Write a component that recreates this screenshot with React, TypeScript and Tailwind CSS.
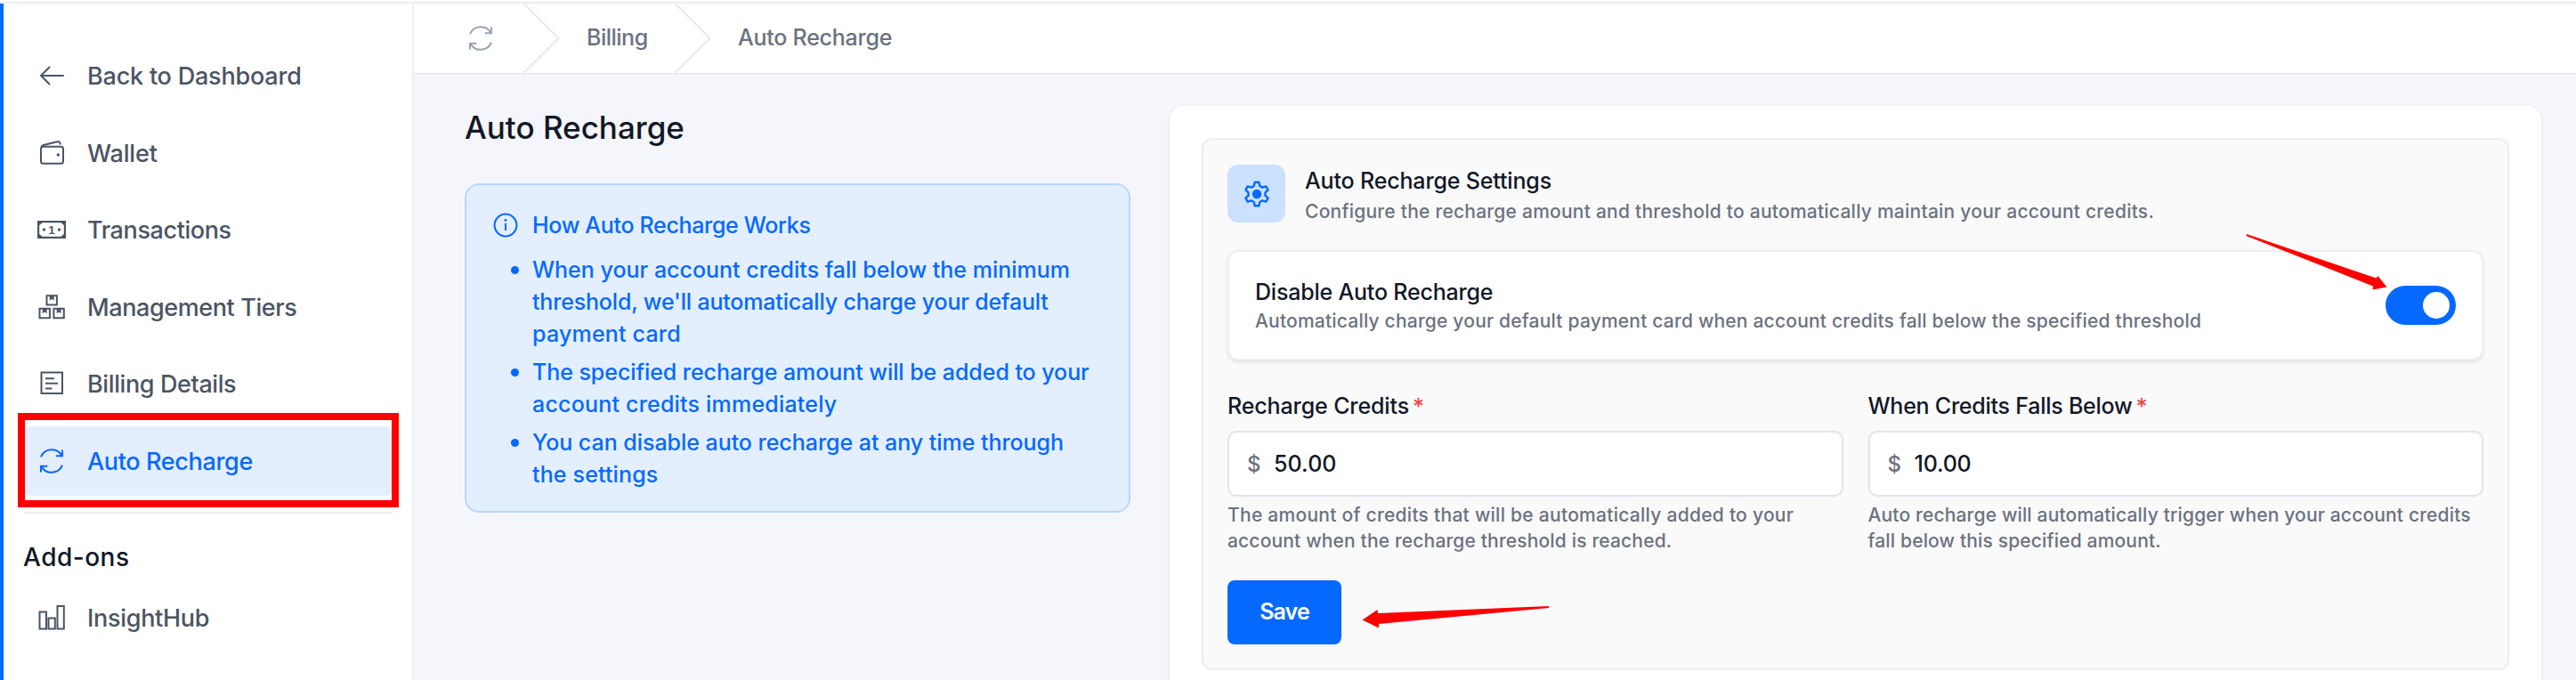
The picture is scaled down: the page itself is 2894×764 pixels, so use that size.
import type { ReactNode } from 'react';

function RefreshIcon({ className }: { className?: string }) {
  return (
    <svg className={className} width="30" height="30" viewBox="-15 -15 30 30" fill="none" stroke="currentColor" strokeWidth="2">
      <path d="M-12 -4.7 A13 13 0 0 1 11.5 -6 M12 -12.5 V-5.7 H4.7" />
      <path d="M12 4.7 A13 13 0 0 1 -11.5 6 M-12 12.5 V5.7 H-4.7" />
    </svg>
  );
}

const ArrowIcon = () => (
  <svg width="30" height="30" viewBox="0 0 30 30" fill="none" stroke="currentColor" strokeWidth="2" strokeLinecap="round">
    <path d="M28 15 H3 M12.5 5.5 L3 15 L12.5 24.5" />
  </svg>
);

const WalletIcon = () => (
  <svg width="30" height="30" viewBox="0 0 30 30" fill="none" stroke="currentColor" strokeWidth="2">
    <rect x="3" y="7.7" width="25" height="19" rx="2.5" />
    <path d="M3.4 8 Q4 6.6 6 6 L21 2.3 Q24.6 1.2 24.6 5.6" />
    <circle cx="22.3" cy="17" r="1.7" fill="currentColor" stroke="none" />
  </svg>
);

const BanknoteIcon = () => (
  <svg width="32" height="20" viewBox="0 0 32 20" fill="none">
    <rect x="1.1" y="1.1" width="29.8" height="17.8" stroke="currentColor" strokeWidth="2.2" />
    <path d="M1 1h6L1 6z M31 1h-6l6 5z M1 19h6l-6-5z M31 19h-6l6-5z" fill="currentColor" />
    <circle cx="7.5" cy="10" r="1.7" fill="currentColor" />
    <circle cx="24.5" cy="10" r="1.7" fill="currentColor" />
    <text x="15.7" y="14.7" textAnchor="middle" fill="currentColor" className="font-['Liberation_Sans',sans-serif] text-[13.5px] font-bold">1</text>
  </svg>
);

const BoxesIcon = () => (
  <svg width="30" height="30" viewBox="0 0 30 30" fill="none" stroke="currentColor" strokeWidth="2">
    <path d="M9.5 2.2h11.4v10.4H9.5z M1.5 16.8h11.4v10.4H1.5z M17.4 16.8h11.4v10.4H17.4z" />
    <path d="M12.8 2.5h4.8v5.3l-2.4-1.8-2.4 1.8z M4.8 17h4.8v5.3l-2.4-1.8-2.4 1.8z M20.7 17h4.8v5.3l-2.4-1.8-2.4 1.8z" fill="currentColor" stroke="none" />
  </svg>
);

const BillIcon = () => (
  <svg width="30" height="30" viewBox="0 0 30 30" fill="none" stroke="currentColor" strokeWidth="2">
    <path d="M3.5 2.5h23.5v23.5h-23.5z M8 9.2h10 M8 14.8h14 M8 20.4h7.5" />
  </svg>
);

const BarsIcon = () => (
  <svg width="30" height="30" viewBox="0 0 30 30" fill="none" stroke="currentColor" strokeWidth="2">
    <path d="M1.5 8.5h7.5v19h-7.5z M11.5 15.5h7.3v12h-7.3z M21.5 2h7.3v25.5h-7.3z" />
  </svg>
);

const GearIcon = () => (
  <svg width="32" height="32" viewBox="-16 -16 32 32" fill="none" stroke="currentColor" strokeWidth="2.4" strokeLinejoin="round">
    <path d="M-2.3 -13.2 L2.3 -13.2 L3.3 -9 L6.14 -7.36 L10.28 -8.59 L12.58 -4.61 L9.44 -1.64 L9.44 1.64 L12.58 4.61 L10.28 8.59 L6.14 7.36 L3.3 9 L2.3 13.2 L-2.3 13.2 L-3.3 9 L-6.14 7.36 L-10.28 8.59 L-12.58 4.61 L-9.44 1.64 L-9.44 -1.64 L-12.58 -4.61 L-10.28 -8.59 L-6.14 -7.36 L-3.3 -9 Z" />
    <circle r="5.2" fill="currentColor" stroke="none" />
  </svg>
);

const Chevron = () => (
  <svg className="shrink-0" width="41" height="78" viewBox="0 0 41 78" fill="none" stroke="#e8e9ee" strokeWidth="2">
    <path d="M0.5 0 L39.5 39 L0.5 78" />
  </svg>
);

interface NavItemProps {
  icon: ReactNode;
  label: string;
  tracking: string;
  active?: boolean;
}

function NavItem({ icon, label, tracking, active }: NavItemProps) {
  return (
    <a
      className={`relative flex h-[78.5px] items-center rounded-lg pl-[14px] text-[27px] ${tracking} ${
        active ? 'bg-[#e3efff] text-[#0569ff]' : 'text-[#4b5563]'
      }`}
    >
      <span className="flex w-[33px] justify-center">{icon}</span>
      <span className="ml-6 pt-[2px]">{label}</span>
      {active && <span className="absolute -top-[14.5px] -left-[7px] h-[106px] w-[428px] border-8 border-[#ff0000]" />}
    </a>
  );
}

interface AmountFieldProps {
  label: string;
  labelTracking: string;
  value: string;
  valueTracking: string;
  children: ReactNode;
}

function AmountField({ label, labelTracking, value, valueTracking, children }: AmountFieldProps) {
  return (
    <div className="flex-1">
      <label className={`flex h-9 items-center pt-[2px] text-[25px] text-[#111827] ${labelTracking}`}>
        {label}
        <span className="ml-1 h-[30px] text-[25px] leading-[30px] tracking-normal text-[#ef4444]">*</span>
      </label>
      <div className="mt-[10px] flex h-[74px] items-center rounded-[10px] border-2 border-[#dee5ee] bg-white pt-px pl-5 text-[25px]">
        <span className="w-[30px] text-[24px] text-[#6b7280]">$</span>
        <span className={`text-[#111827] ${valueTracking}`}>{value}</span>
      </div>
      <p className="mt-[6px] text-[21px] leading-[29.3px] text-[#6b7280]">{children}</p>
    </div>
  );
}

export default function App() {
  return (
    <div className="relative flex h-[764px] w-[2894px] flex-col overflow-hidden bg-[#f5f6fb] font-['Inter',sans-serif] font-medium whitespace-nowrap">
      <div className="h-1 shrink-0 border-b-2 border-[#ededf0] bg-white" />

      <div className="flex min-h-0 flex-1">
        {/* Sidebar */}
        <aside className="h-full w-[465px] shrink-0 border-r-2 border-l-4 border-r-[#eeeef2] border-l-[#0569ff] bg-white pt-[42px] pr-[22px] pl-[23px]">
          <nav className="flex flex-col gap-2">
            <NavItem icon={<ArrowIcon />} label="Back to Dashboard" tracking="tracking-[-0.21px]" />
            <NavItem icon={<WalletIcon />} label="Wallet" tracking="tracking-[-0.15px]" />
            <NavItem icon={<BanknoteIcon />} label="Transactions" tracking="tracking-[-0.4px]" />
            <NavItem icon={<BoxesIcon />} label="Management Tiers" tracking="tracking-[-0.4px]" />
            <NavItem icon={<BillIcon />} label="Billing Details" tracking="tracking-[-0.4px]" />
            <NavItem icon={<RefreshIcon />} label="Auto Recharge" tracking="tracking-[-0.35px]" active />
          </nav>
          <div className="mt-[18px] h-[2px] bg-[#f0f0f2]" />
          <h3 className="mt-[31px] -ml-px text-[28px] leading-9 tracking-[0.5px] text-[#111827]">Add-ons</h3>
          <div className="mt-[11px]">
            <NavItem icon={<BarsIcon />} label="InsightHub" tracking="tracking-[-0.3px]" />
          </div>
        </aside>

        <main className="flex flex-1 flex-col">
          {/* Breadcrumb */}
          <header className="flex h-20 shrink-0 items-center border-b-2 border-[#e9ebf0] bg-white pl-[60px] text-[25px] text-[#6b7280]">
            <RefreshIcon className="text-[#9ca3af]" />
            <span className="ml-[33px] flex"><Chevron /></span>
            <span className="ml-[30px] w-[99px] tracking-[-0.5px]">Billing</span>
            <Chevron />
            <span className="ml-[30px] tracking-[-0.25px]">Auto Recharge</span>
          </header>

          <div className="flex flex-1 items-start pr-10 pl-[57px]">
            {/* Explanation */}
            <section className="w-[748px] shrink-0 pt-[35px]">
              <h1 className="h-12 text-[35px] leading-[48px] text-[#111827]">Auto Recharge</h1>
              <div className="mt-[39px] h-[370px] rounded-2xl border-2 border-[#bad6ff] bg-[#e3efff] pt-[26px] pl-[30px] text-[25px] leading-9 text-[#0569ff]">
                <div className="flex items-center">
                  <svg width="28" height="28" viewBox="0 0 28 28" fill="none" stroke="currentColor" strokeWidth="2">
                    <circle cx="14" cy="14" r="12.4" />
                    <path d="M14 11.8v8.2" />
                    <circle cx="14" cy="8.4" r="1.4" fill="currentColor" stroke="none" />
                  </svg>
                  <h2 className="ml-4 pt-px tracking-[-0.33px]">How Auto Recharge Works</h2>
                </div>
                <ul className="mt-[14px] space-y-[7px] pl-[44px]">
                  <li className="relative">
                    <span className="absolute top-[14px] -left-6 size-[9px] rounded-full bg-[#0569ff]" />
                    When your account credits fall below the minimum<br />
                    <span className="tracking-[-0.18px]">threshold, we'll automatically charge your default</span><br />
                    <span className="tracking-[0.2px]">payment card</span>
                  </li>
                  <li className="relative">
                    <span className="absolute top-[14px] -left-6 size-[9px] rounded-full bg-[#0569ff]" />
                    <span className="tracking-[-0.06px]">The specified recharge amount will be added to your</span><br />
                    <span className="tracking-[0.2px]">account credits immediately</span>
                  </li>
                  <li className="relative">
                    <span className="absolute top-[14px] -left-6 size-[9px] rounded-full bg-[#0569ff]" />
                    <span className="tracking-[-0.04px]">You can disable auto recharge at any time through</span><br />
                    <span className="tracking-[0.15px]">the settings</span>
                  </li>
                </ul>
              </div>
            </section>

            {/* Settings card */}
            <section className="mt-[35px] ml-11 h-[700px] w-[1541px] rounded-2xl bg-white px-9 pt-9 shadow-[0_1px_4px_rgba(0,0,0,0.08)]">
              <div className="h-[598px] rounded-xl border-2 border-[#eeeef0] bg-[#fafafa] px-[27px] pt-[28px]">
                <div className="flex h-[65px]">
                  <div className="flex size-[65px] items-center justify-center rounded-xl bg-[#cce0ff] text-[#0569ff]">
                    <GearIcon />
                  </div>
                  <div className="-mt-px ml-[22px]">
                    <h2 className="text-[25px] leading-[38px] tracking-[-0.16px] text-[#111827]">Auto Recharge Settings</h2>
                    <p className="text-[21px] leading-[31px] tracking-[0.24px] text-[#6b7280]">
                      Configure the recharge amount and threshold to automatically maintain your account credits.
                    </p>
                  </div>
                </div>

                <div className="mt-[31px] flex h-[124px] items-center justify-between rounded-xl border-2 border-[#efeff1] bg-white pr-[29px] pl-[29px] shadow-[0_2px_4px_rgba(0,0,0,0.1)]">
                  <div className="-mt-px">
                    <h3 className="text-[25px] leading-9 tracking-[-0.2px] text-[#111827]">Disable Auto Recharge</h3>
                    <p className="text-[21px] leading-[30px] tracking-[0.2px] text-[#6b7280]">
                      Automatically charge your default payment card when account credits fall below the specified threshold
                    </p>
                  </div>
                  <button className="flex h-11 w-[79px] items-center justify-end rounded-full bg-[#0569ff] pr-[7px]">
                    <span className="size-[30px] rounded-full bg-white" />
                  </button>
                </div>

                <div className="mt-[33px] flex gap-7">
                  <AmountField label="Recharge Credits" labelTracking="tracking-[-0.12px]" value="50.00" valueTracking="tracking-[0.1px]">
                    <span className="tracking-[0.27px]">The amount of credits that will be automatically added to your</span><br />
                    <span className="tracking-[0.16px]">account when the recharge threshold is reached.</span>
                  </AmountField>
                  <AmountField label="When Credits Falls Below" labelTracking="tracking-[-0.24px]" value="10.00" valueTracking="tracking-[-0.2px]">
                    <span className="tracking-[0.16px]">Auto recharge will automatically trigger when your account credits</span><br />
                    <span className="tracking-[0.16px]">fall below this specified amount.</span>
                  </AmountField>
                </div>

                <button className="mt-[29.5px] flex h-[72px] w-32 items-center justify-center rounded-lg bg-[#0569ff] text-[25px] font-semibold tracking-[-0.9px] text-white">
                  Save
                </button>
              </div>
            </section>
          </div>
        </main>
      </div>

      {/* Pointer arrows */}
      <svg className="pointer-events-none absolute inset-0" width="2894" height="764" viewBox="0 0 2894 764" fill="#ff0000">
        <path d="M2524 263 L2669.5 312.5 L2671.5 310 L2681.5 322.5 L2665.5 325.5 L2666 321.5 L2523.5 265 Z" />
        <path d="M1740 681 L1548 689 L1547.5 685 L1530.5 696.5 L1549 705.5 V701 L1740 683 Z" />
      </svg>
    </div>
  );
}
